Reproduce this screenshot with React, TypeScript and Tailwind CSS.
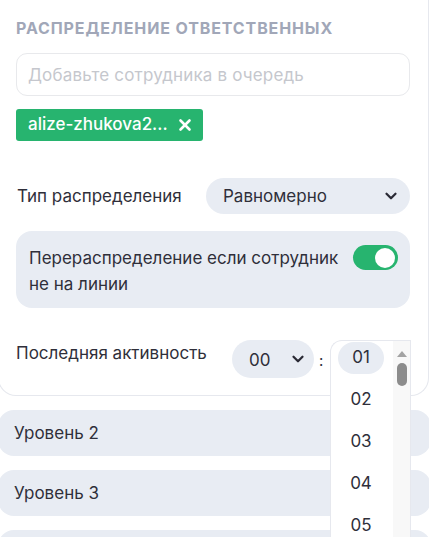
import { ChevronDown, X } from "lucide-react";

const MINUTES = ["01", "02", "03", "04", "05"];

function Chevron() {
  return <ChevronDown className="h-[18px] w-[18px] text-[#2a2a35]" strokeWidth={3} />;
}

export default function App() {
  return (
    <div className="relative h-[537px] w-[429px] overflow-hidden bg-white font-['Inter','Noto_Sans',sans-serif] text-[17px] text-[#2f2f3a]">
      {/* card */}
      <div className="-ml-[2px] w-[431px] rounded-b-[18px] border border-t-0 border-[#e6e8ee] pb-[17px] pl-[17px] pr-[18px] pt-[18px]">
        <h2 className="text-[16px] font-bold uppercase leading-[20px] tracking-[0.055em] text-[#a1a7b8]">
          Распределение ответственных
        </h2>

        <div className="mt-[15px] flex h-[43px] items-center rounded-[11px] border border-[#e8e9ec] px-[11px]">
          <span className="mt-[2px] text-[17px] tracking-[0.01em] text-[#c5c7cd]">Добавьте сотрудника в очередь</span>
        </div>

        <div className="mt-[13px] flex h-[32px] w-[187px] items-center justify-between rounded-[3px] bg-[#27b46f] pl-[12px] pr-[9px] text-white">
          <span className="text-[17px] font-medium">alize-zhukova2...</span>
          <X className="h-[18px] w-[18px]" strokeWidth={3.5} />
        </div>

        <div className="mt-[37px] flex items-center justify-between">
          <span className="mt-[2px] pl-[1px]">Тип распределения</span>
          <div className="flex h-[36px] w-[204px] items-center justify-between rounded-full bg-[#e8ecf3] pl-[17px] pr-[10px]">
            <span className="mt-[2px]">Равномерно</span>
            <Chevron />
          </div>
        </div>

        <div className="mt-[17px] flex h-[77px] items-start gap-[8px] rounded-[16px] bg-[#e8ecf3] pl-[13px] pr-[12px] pt-[14px]">
          <span className="flex-1 leading-[26px]">
            Перераспределение если сотрудник не на линии
          </span>
          <div className="flex h-[25px] w-[45px] shrink-0 items-center justify-end rounded-full bg-[#27b46f] pr-[3px]">
            <div className="h-[20px] w-[20px] rounded-full bg-white" />
          </div>
        </div>

        <div className="mt-[32px] flex items-start">
          <span className="mt-[1px] w-[216px] shrink-0">Последняя активность</span>
          <div className="flex h-[38px] w-[82px] items-center justify-between rounded-full bg-[#e8ecf3] pl-[17px] pr-[7px]">
            <span className="mt-[4px]">00</span>
            <Chevron />
          </div>
          <span className="ml-[5px] mt-[10px] text-[15px]">:</span>
        </div>
      </div>

      {/* collapsed levels */}
      <div className="mt-[14px] flex flex-col gap-[14px]">
        {["Уровень 2", "Уровень 3", ""].map((label, i) => (
          <div
            key={i}
            className="-ml-[2px] flex h-[46px] w-[433px] shrink-0 items-center rounded-[16px] bg-[#e8ecf3] pl-[16px] pt-[1px]"
          >
            {label}
          </div>
        ))}
      </div>

      {/* open minutes listbox */}
      <div className="absolute left-[330px] top-[340px] flex h-[220px] w-[81px] rounded-tl-[12px] border border-r-0 border-b-0 border-[#e6e8ee] bg-white">
        <ul className="flex-1 pl-[7px] pt-[1px]">
          {MINUTES.map((m, i) => (
            <li
              key={m}
              className={
                i === 0
                  ? "flex h-[32px] w-[46px] items-center justify-center rounded-full bg-[#e8ecf3]"
                  : "mt-[10px] flex h-[32px] w-[46px] items-center justify-center"
              }
            >
              {m}
            </li>
          ))}
        </ul>
        <div className="flex w-[18px] flex-col items-center border-r border-[#e6e8ee] bg-[#f8f8f8] pt-[10px]">
          <div className="h-0 w-0 border-x-[5px] border-b-[6px] border-x-transparent border-b-[#a3a3a3]" />
          <div className="mt-[6px] h-[23px] w-[10px] rounded-full bg-[#8c8c8c]" />
        </div>
      </div>
    </div>
  );
}
